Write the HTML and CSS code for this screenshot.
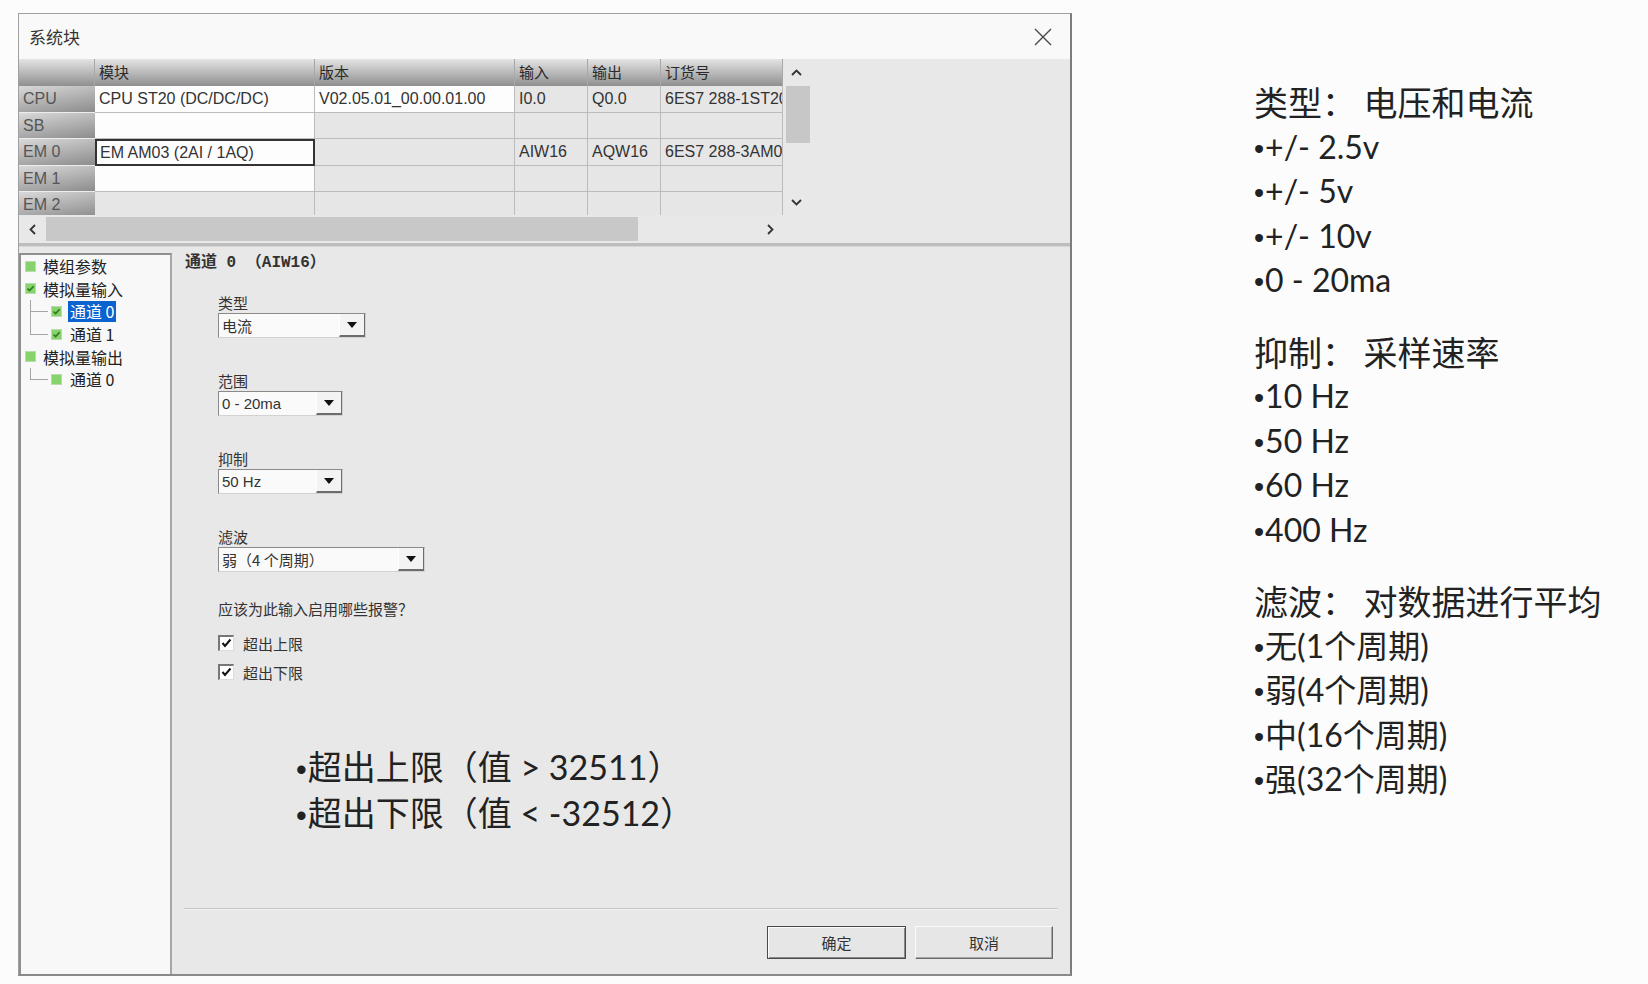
FILE: index.html
```html
<!DOCTYPE html>
<html lang="zh-CN">
<head>
    <meta charset="UTF-8">
    <title>系统块</title>
    <link rel="stylesheet" href="styles.css">
</head>
<body>
<div class="page">

    <div class="dialog">
        <div class="titlebar">
            <span class="title">系统块</span>
            <svg class="close" width="18" height="18" viewBox="0 0 18 18">
                <path d="M1 1 L17 17 M17 1 L1 17" stroke="#4a4a4a" stroke-width="1.4" fill="none"/>
            </svg>
        </div>

        <!-- module table with its scrollbars -->
        <div class="modules">
            <div class="grid-wrap">
                <div class="grid">
                    <div class="hd"></div>
                    <div class="hd">模块</div>
                    <div class="hd">版本</div>
                    <div class="hd">输入</div>
                    <div class="hd">输出</div>
                    <div class="hd">订货号</div>

                    <div class="rh">CPU</div>
                    <div class="c w">CPU ST20 (DC/DC/DC)</div>
                    <div class="c w">V02.05.01_00.00.01.00</div>
                    <div class="c">I0.0</div>
                    <div class="c">Q0.0</div>
                    <div class="c">6ES7 288-1ST20-0AA0</div>

                    <div class="rh">SB</div>
                    <div class="c w"></div>
                    <div class="c"></div>
                    <div class="c"></div>
                    <div class="c"></div>
                    <div class="c"></div>

                    <div class="rh">EM 0</div>
                    <div class="c w sel">EM AM03 (2AI / 1AQ)</div>
                    <div class="c"></div>
                    <div class="c">AIW16</div>
                    <div class="c">AQW16</div>
                    <div class="c">6ES7 288-3AM03-0AA0</div>

                    <div class="rh">EM 1</div>
                    <div class="c w"></div>
                    <div class="c"></div>
                    <div class="c"></div>
                    <div class="c"></div>
                    <div class="c"></div>

                    <div class="rh">EM 2</div>
                    <div class="c"></div>
                    <div class="c"></div>
                    <div class="c"></div>
                    <div class="c"></div>
                    <div class="c"></div>
                </div>
                <div class="vscroll">
                    <div class="arrow-up">
                        <svg width="11" height="7" viewBox="0 0 11 7"><polyline points="1,6 5.5,1.5 10,6" stroke="#333" stroke-width="1.8" fill="none"/></svg>
                    </div>
                    <div class="vthumb"></div>
                    <div class="arrow-down">
                        <svg width="11" height="7" viewBox="0 0 11 7"><polyline points="1,1 5.5,5.5 10,1" stroke="#333" stroke-width="1.8" fill="none"/></svg>
                    </div>
                </div>
            </div>
            <div class="hscroll">
                <div class="arrow-left">
                    <svg width="7" height="11" viewBox="0 0 7 11"><polyline points="6,1 1.5,5.5 6,10" stroke="#333" stroke-width="1.8" fill="none"/></svg>
                </div>
                <div class="hthumb"></div>
                <div class="arrow-right">
                    <svg width="7" height="11" viewBox="0 0 7 11"><polyline points="1,1 5.5,5.5 1,10" stroke="#333" stroke-width="1.8" fill="none"/></svg>
                </div>
            </div>
        </div>

        <div class="divider"></div>

        <div class="lower">
            <div class="tree">
                <div class="node">
                    <svg class="ico" viewBox="0 0 11 11"><rect x="0.5" y="0.5" width="10" height="10" fill="#86d36c" stroke="#b9dcae"/></svg>
                    模组参数
                </div>
                <div class="node">
                    <svg class="ico" viewBox="0 0 11 11"><rect x="0.5" y="0.5" width="10" height="10" fill="#86d36c" stroke="#b9dcae"/><path d="M2.5 5.5 L4.6 7.6 L8.6 3.2" stroke="#2c7a1c" stroke-width="1.6" fill="none"/></svg>
                    模拟量输入
                </div>
                <div class="kids">
                    <div class="node leaf">
                        <svg class="ico" viewBox="0 0 11 11"><rect x="0.5" y="0.5" width="10" height="10" fill="#86d36c" stroke="#b9dcae"/><path d="M2.5 5.5 L4.6 7.6 L8.6 3.2" stroke="#2c7a1c" stroke-width="1.6" fill="none"/></svg>
                        <span class="hl">通道 0</span>
                    </div>
                    <div class="node leaf">
                        <svg class="ico" viewBox="0 0 11 11"><rect x="0.5" y="0.5" width="10" height="10" fill="#86d36c" stroke="#b9dcae"/><path d="M2.5 5.5 L4.6 7.6 L8.6 3.2" stroke="#2c7a1c" stroke-width="1.6" fill="none"/></svg>
                        <span class="txt">通道 1</span>
                    </div>
                </div>
                <div class="node">
                    <svg class="ico" viewBox="0 0 11 11"><rect x="0.5" y="0.5" width="10" height="10" fill="#86d36c" stroke="#b9dcae"/></svg>
                    模拟量输出
                </div>
                <div class="kids">
                    <div class="node leaf">
                        <svg class="ico" viewBox="0 0 11 11"><rect x="0.5" y="0.5" width="10" height="10" fill="#86d36c" stroke="#b9dcae"/></svg>
                        <span class="txt">通道 0</span>
                    </div>
                </div>
            </div>

            <div class="content">
                <div class="channel">通道 0 （AIW16）</div>

                <div class="form">
                    <div class="fields">
                        <div class="field">
                            <div class="label">类型</div>
                            <div class="combo w148"><span class="val">电流</span><span class="drop"></span></div>
                        </div>
                        <div class="field">
                            <div class="label">范围</div>
                            <div class="combo w125"><span class="val latin">0 - 20ma</span><span class="drop"></span></div>
                        </div>
                        <div class="field">
                            <div class="label">抑制</div>
                            <div class="combo w125"><span class="val latin">50 Hz</span><span class="drop"></span></div>
                        </div>
                        <div class="field">
                            <div class="label">滤波</div>
                            <div class="combo w207"><span class="val">弱（4 个周期）</span><span class="drop"></span></div>
                        </div>
                    </div>

                    <div class="question">应该为此输入启用哪些报警？</div>
                    <label class="check">
                        <span class="box"><svg width="11" height="11" viewBox="0 0 11 11"><path d="M1.5 5 L4 8 L9.5 1.5" stroke="#111" stroke-width="2" fill="none"/></svg></span>
                        超出上限
                    </label>
                    <label class="check">
                        <span class="box"><svg width="11" height="11" viewBox="0 0 11 11"><path d="M1.5 5 L4 8 L9.5 1.5" stroke="#111" stroke-width="2" fill="none"/></svg></span>
                        超出下限
                    </label>
                </div>

                <div class="limits">
                    <div><span class="dot">•</span>超出上限（值 &gt; 32511）</div>
                    <div><span class="dot">•</span>超出下限（值 &lt; -32512）</div>
                </div>

                <div class="footer">
                    <div class="sep"></div>
                    <div class="buttons">
                        <button class="btn default">确定</button>
                        <button class="btn">取消</button>
                    </div>
                </div>
            </div>
        </div>
    </div>

    <div class="notes">
        <div class="group">
            <div class="head">类型： 电压和电流</div>
            <div class="item"><span class="dot">•</span>+/- 2.5v</div>
            <div class="item"><span class="dot">•</span>+/- 5v</div>
            <div class="item"><span class="dot">•</span>+/- 10v</div>
            <div class="item"><span class="dot">•</span>0 - 20ma</div>
        </div>
        <div class="group">
            <div class="head">抑制： 采样速率</div>
            <div class="item"><span class="dot">•</span>10 Hz</div>
            <div class="item"><span class="dot">•</span>50 Hz</div>
            <div class="item"><span class="dot">•</span>60 Hz</div>
            <div class="item"><span class="dot">•</span>400 Hz</div>
        </div>
        <div class="group">
            <div class="head">滤波： 对数据进行平均</div>
            <div class="item"><span class="dot">•</span>无(1个周期)</div>
            <div class="item"><span class="dot">•</span>弱(4个周期)</div>
            <div class="item"><span class="dot">•</span>中(16个周期)</div>
            <div class="item"><span class="dot">•</span>强(32个周期)</div>
        </div>
    </div>

</div>
</body>
</html>
```

FILE: styles.css
```css
body {
    margin: 0;
    background-color: #fcfcfc;
    font-family: "Noto Sans CJK SC", sans-serif;
    color: #222;
}
.page {
    display: flex;
    align-items: flex-start;
}

/* dialog frame */
.dialog {
    margin: 13px 0 0 18px;
    width: 1054px;
    height: 963px;
    box-sizing: border-box;
    border: 1px solid #a0a0a0;
    border-right: 2px solid #7c7c7c;
    border-bottom: 2px solid #8a8a8a;
    background-color: #e8e8e8;
    display: flex;
    flex-direction: column;
}
.titlebar {
    height: 45px;
    flex: none;
    background-color: #f9f9f9;
    display: flex;
    align-items: center;
    justify-content: space-between;
    padding: 0 18px 0 10px;
}
.title {
    font-size: 17px;
    color: #333;
}

/* module table */
.modules {
    height: 184px;
    flex: none;
}
.grid-wrap {
    display: flex;
    height: 156px;
}
.grid {
    width: 764px;
    height: 156px;
    overflow: hidden;
    display: grid;
    grid-template-columns: 76px 220px 200px 73px 73px 122px;
    grid-template-rows: 27px 27px 26px 27px 26px 26px;
    font-family: "Liberation Sans", "Noto Sans CJK SC", sans-serif;
    font-size: 16px;
}
.grid > div {
    box-sizing: border-box;
    white-space: nowrap;
    overflow: hidden;
    padding-left: 4px;
    display: flex;
    align-items: center;
}
.hd {
    background: linear-gradient(to bottom, #e4e4e4, #8f8f8f);
    border-right: 1px solid #a8a8a8;
    font-family: "Noto Sans CJK SC", sans-serif;
    font-size: 15px;
    color: #2a2a2a;
    align-items: flex-start !important;
    padding-top: 2px;
}
.rh {
    background: linear-gradient(170deg, #d9d9d9, #8c8c8c);
    border-bottom: 1px solid #ededed;
    color: #555;
}
.c {
    background-color: #e6e6e6;
    border-right: 1px solid #bcbcbc;
    border-bottom: 1px solid #bcbcbc;
    color: #333;
}
.c.w {
    background-color: #fdfdfd;
}
.c.sel {
    border: 2px solid #333;
    padding-left: 3px !important;
}

.vscroll {
    width: 27px;
    display: flex;
    flex-direction: column;
}
.arrow-up {
    height: 27px;
    display: flex;
    align-items: center;
    justify-content: center;
}
.vthumb {
    height: 57px;
    width: 24px;
    margin-left: 3px;
    background-color: #c7c7c7;
}
.arrow-down {
    margin-top: auto;
    height: 25px;
    display: flex;
    align-items: center;
    justify-content: center;
}
.hscroll {
    width: 764px;
    height: 28px;
    display: flex;
    align-items: center;
}
.arrow-left {
    width: 27px;
    display: flex;
    justify-content: center;
}
.hthumb {
    width: 592px;
    height: 24px;
    background-color: #c8c8c8;
}
.arrow-right {
    margin-left: auto;
    width: 26px;
    display: flex;
    justify-content: center;
}
.divider {
    height: 4px;
    flex: none;
    background-color: #bdbdbd;
    border-bottom: 1px solid #d6d6d6;
    box-sizing: border-box;
}

/* lower part: tree + channel settings */
.lower {
    flex: 1;
    display: flex;
    min-height: 0;
}
.tree {
    width: 153px;
    margin-top: 6px;
    box-sizing: border-box;
    background-color: #f8f8f8;
    border-top: 2px solid #8f8f8f;
    border-left: 2px solid #8f8f8f;
    border-right: 2px solid #a6a6a6;
    font-size: 16px;
    color: #222;
}
.node {
    height: 22.6px;
    display: flex;
    align-items: center;
    gap: 7px;
    padding-left: 4px;
    white-space: nowrap;
}
.ico {
    width: 11px;
    height: 11px;
    flex: none;
}
.kids .node {
    position: relative;
    padding-left: 30px;
    gap: 6px;
}
.kids .node::before {
    content: "";
    position: absolute;
    left: 9px;
    top: 0;
    width: 17px;
    height: 50%;
    border-left: 1px solid #a4a4a4;
    border-bottom: 1px solid #a4a4a4;
}
.kids .node:not(:last-child)::after {
    content: "";
    position: absolute;
    left: 9px;
    top: 50%;
    bottom: 0;
    border-left: 1px solid #a4a4a4;
}
.hl {
    background-color: #0b63cf;
    color: #fff;
    padding: 0 2px;
    line-height: 21px;
}
.txt {
    padding: 0 2px;
}

.content {
    flex: 1;
    display: flex;
    flex-direction: column;
    padding: 6px 0 15px 0;
}
.channel {
    margin-left: 13px;
    height: 20px;
    line-height: 20px;
    font-family: "Liberation Mono", "Noto Sans CJK SC", monospace;
    font-weight: bold;
    font-size: 16px;
    color: #333;
}
.form {
    margin: 20px 0 0 46px;
    font-size: 15px;
    color: #333;
}
.fields {
    display: flex;
    flex-direction: column;
    gap: 33px;
}
.label {
    height: 20px;
    line-height: 20px;
}
.combo {
    height: 25px;
    box-sizing: border-box;
    display: flex;
    background-color: #fafafa;
    border-top: 1px solid #8a8a8a;
    border-left: 1px solid #8a8a8a;
    border-right: 1px solid #d2d2d2;
    border-bottom: 1px solid #d2d2d2;
}
.w148 { width: 148px; }
.w125 { width: 125px; }
.w207 { width: 207px; }
.val {
    flex: 1;
    padding-left: 3px;
    line-height: 23px;
    white-space: nowrap;
}
.val.latin {
    font-family: "Liberation Sans", sans-serif;
}
.drop {
    width: 26px;
    box-sizing: border-box;
    background-color: #f3f3f3;
    border-left: 1px solid #ffffff;
    border-right: 1px solid #6c6c6c;
    border-bottom: 2px solid #6c6c6c;
    display: flex;
    align-items: center;
    justify-content: center;
}
.drop::after {
    content: "";
    border-left: 5px solid transparent;
    border-right: 5px solid transparent;
    border-top: 6px solid #111;
}
.question {
    margin-top: 27px;
    height: 20px;
    line-height: 20px;
}
.check {
    display: flex;
    align-items: center;
    gap: 9px;
    height: 20px;
    margin-top: 14px;
}
.check + .check {
    margin-top: 9px;
}
.box {
    width: 16px;
    height: 16px;
    box-sizing: border-box;
    background-color: #fff;
    border-top: 2px solid #777;
    border-left: 2px solid #777;
    border-right: 1px solid #dcdcdc;
    border-bottom: 1px solid #dcdcdc;
    display: flex;
    align-items: center;
    justify-content: center;
}

.limits {
    margin: 62px 0 0 124px;
    font-family: "Lato", "Noto Sans CJK SC", sans-serif;
    font-size: 34px;
    line-height: 46px;
    color: #222;
}
.limits > div,
.item {
    height: 46px;
}
.dot {
    font-family: "Liberation Sans", sans-serif;
    font-size: 0.9em;
    line-height: 0;
    margin-right: 1px;
}

.footer {
    margin-top: auto;
}
.sep {
    margin: 0 12px;
    height: 2px;
    background-color: #c6c6c6;
    border-bottom: 1px solid #f2f2f2;
    box-sizing: border-box;
}
.buttons {
    display: flex;
    justify-content: flex-end;
    gap: 9px;
    margin-top: 16px;
    padding-right: 17px;
}
.btn {
    width: 138px;
    height: 33px;
    box-sizing: border-box;
    background-color: #e6e6e6;
    border: 1px solid;
    border-color: #fbfbfb #6a6a6a #6a6a6a #fbfbfb;
    box-shadow: inset -1px -1px 0 #a6a6a6;
    font-family: "Noto Sans CJK SC", sans-serif;
    font-size: 15px;
    color: #333;
    padding: 0;
}
.btn.default {
    width: 139px;
    border: 1px solid #4a4a4a;
    box-shadow: inset 1px 1px 0 #fbfbfb, inset -1px -1px 0 #8a8a8a;
}

/* notes column on the right */
.notes {
    margin: 80px 0 0 182px;
    color: #222;
}
.group + .group {
    margin-top: 27px;
}
.head {
    font-size: 34px;
    line-height: 44.5px;
    height: 44.5px;
    white-space: nowrap;
}
.item {
    font-family: "Lato", "Noto Sans CJK SC", sans-serif;
    font-size: 32px;
    line-height: 44.5px;
    height: 44.5px;
    white-space: nowrap;
}
```
